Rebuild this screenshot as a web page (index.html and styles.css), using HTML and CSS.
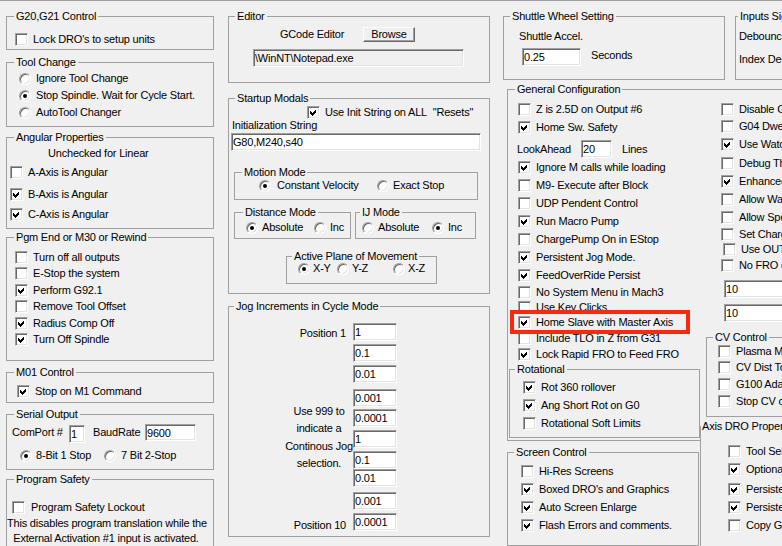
FILE: index.html
```html
<!DOCTYPE html>
<html>
<head>
<meta charset="utf-8">
<title>General Config</title>
<link rel="stylesheet" href="styles.css">
</head>
<body>
<div class="page">

  <div class="col col1">
    <fieldset class="grp g20"><legend>G20,G21 Control</legend>
      <div class="row h16 mt8 pl8"><span class="cb"></span>Lock DRO's to setup units</div>
    </fieldset>

    <fieldset class="grp tool"><legend>Tool Change</legend>
      <div class="pt1 pl12">
        <div class="row h17"><span class="rb"></span>Ignore Tool Change</div>
        <div class="row h17"><span class="rb on"></span>Stop Spindle. Wait for Cycle Start.</div>
        <div class="row h17"><span class="rb"></span>AutoTool Changer</div>
      </div>
    </fieldset>

    <fieldset class="grp angular"><legend>Angular Properties</legend>
      <div class="note">Unchecked for Linear</div>
      <div class="pl3">
        <div class="row h16 mt4"><span class="cb"></span>A-Axis is Angular</div>
        <div class="row h16 mt6"><span class="cb on"><svg viewBox="0 0 13 13" shape-rendering="crispEdges"><path d="M3 5l2 2 4-4v3l-4 4-2-2z"/></svg></span>B-Axis is Angular</div>
        <div class="row h16 mt4"><span class="cb on"><svg viewBox="0 0 13 13" shape-rendering="crispEdges"><path d="M3 5l2 2 4-4v3l-4 4-2-2z"/></svg></span>C-Axis is Angular</div>
      </div>
    </fieldset>

    <fieldset class="grp pgm"><legend>Pgm End or M30 or Rewind</legend>
      <div class="pt5 pl8">
        <div class="row h165"><span class="cb"></span>Turn off all outputs</div>
        <div class="row h165"><span class="cb"></span>E-Stop the system</div>
        <div class="row h165"><span class="cb on"><svg viewBox="0 0 13 13" shape-rendering="crispEdges"><path d="M3 5l2 2 4-4v3l-4 4-2-2z"/></svg></span>Perform G92.1</div>
        <div class="row h165"><span class="cb"></span>Remove Tool Offset</div>
        <div class="row h165"><span class="cb on"><svg viewBox="0 0 13 13" shape-rendering="crispEdges"><path d="M3 5l2 2 4-4v3l-4 4-2-2z"/></svg></span>Radius Comp Off</div>
        <div class="row h165"><span class="cb on"><svg viewBox="0 0 13 13" shape-rendering="crispEdges"><path d="M3 5l2 2 4-4v3l-4 4-2-2z"/></svg></span>Turn Off Spindle</div>
      </div>
    </fieldset>

    <fieldset class="grp m01"><legend>M01 Control</legend>
      <div class="row h16 mt4 pl10"><span class="cb on"><svg viewBox="0 0 13 13" shape-rendering="crispEdges"><path d="M3 5l2 2 4-4v3l-4 4-2-2z"/></svg></span>Stop on M1 Command</div>
    </fieldset>

    <fieldset class="grp serial"><legend>Serial Output</legend>
      <div class="com">
        <span class="lbl-com">ComPort #</span><input class="tb tb-com" value="1"><span class="lbl-baud">BaudRate</span><input class="tb tb-baud" value="9600">
      </div>
      <div class="row h13 mt6 pl13 opts">
        <span class="opt w84 g4"><span class="rb on"></span>8-Bit 1 Stop</span>
        <span class="opt"><span class="rb"></span>7 Bit 2-Stop</span>
      </div>
    </fieldset>

    <fieldset class="grp safety"><legend>Program Safety</legend>
      <div class="row h16 mt13 pl5 g6"><span class="cb"></span>Program Safety Lockout</div>
      <div class="safety-note">This disables program translation while the<br>External Activation #1 input is activated.</div>
    </fieldset>
  </div>

  <div class="col col2">
    <fieldset class="grp editor"><legend>Editor</legend>
      <div class="ed-row"><span class="ed-lbl">GCode Editor</span><span class="btn">Browse</span></div>
      <input class="tb ro path" value="\WinNT\Notepad.exe">
    </fieldset>

    <fieldset class="grp startup"><legend>Startup Modals</legend>
      <div class="row h14 pl78"><span class="cb on"><svg viewBox="0 0 13 13" shape-rendering="crispEdges"><path d="M3 5l2 2 4-4v3l-4 4-2-2z"/></svg></span>Use Init String on ALL&nbsp; "Resets"</div>
      <div class="init-lbl">Initialization String</div>
      <input class="tb init" value="G80,M240,s40">

      <fieldset class="grp motion"><legend>Motion Mode</legend>
        <div class="row h13 pl24 opts">
          <span class="opt w118 g6"><span class="rb on"></span>Constant Velocity</span>
          <span class="opt g4"><span class="rb"></span>Exact Stop</span>
        </div>
      </fieldset>

      <div class="modes">
        <fieldset class="grp dist"><legend>Distance Mode</legend>
          <div class="row h13 mt2 pl11 opts">
            <span class="opt w68 g4"><span class="rb on"></span>Absolute</span>
            <span class="opt g4"><span class="rb"></span>Inc</span>
          </div>
        </fieldset>
        <fieldset class="grp ij"><legend>IJ Mode</legend>
          <div class="row h13 mt2 pl6 opts">
            <span class="opt w70 g4"><span class="rb"></span>Absolute</span>
            <span class="opt g4"><span class="rb on"></span>Inc</span>
          </div>
        </fieldset>
      </div>

      <fieldset class="grp plane"><legend>Active Plane of Movement</legend>
        <div class="row h11 pl11 opts">
          <span class="opt w39 g3"><span class="rb on"></span>X-Y</span>
          <span class="opt w56 g3"><span class="rb"></span>Y-Z</span>
          <span class="opt g3"><span class="rb"></span>X-Z</span>
        </div>
      </fieldset>
    </fieldset>

    <fieldset class="grp jog"><legend>Jog Increments in Cycle Mode</legend>
      <div class="jog-body">
        <div class="jog-labels">
          <div class="pos pos1">Position 1</div>
          <div class="jog-note">Use 999 to<br>indicate a<br>Continous Jog<br>selection.</div>
          <div class="pos pos10">Position 10</div>
        </div>
        <div class="jog-inputs">
          <input class="tb" value="1">
          <input class="tb" value="0.1">
          <input class="tb" value="0.01">
          <input class="tb" value="0.001">
          <input class="tb" value="0.0001">
          <input class="tb" value="1">
          <input class="tb" value="0.1">
          <input class="tb" value="0.01">
          <input class="tb" value="0.001">
          <input class="tb" value="0.0001">
        </div>
      </div>
    </fieldset>
  </div>

  <div class="col col3">
    <div class="top3">
      <fieldset class="grp shuttle"><legend>Shuttle Wheel Setting</legend>
        <div class="sh-lbl">Shuttle Accel.</div>
        <div class="sh-row"><input class="tb sh-in" value="0.25"><span class="sh-sec">Seconds</span></div>
      </fieldset>
      <fieldset class="grp inputs"><legend>Inputs Signals</legend>
        <div class="in-lbl1">Debounce Interval</div>
        <div class="in-lbl2">Index Debounce</div>
      </fieldset>
    </div>

    <fieldset class="grp gen"><legend>General Configuration</legend>
      <div class="gen-body">
        <div class="gen-left">
          <div class="row h18 pl10"><span class="cb"></span>Z is 2.5D on Output #6</div>
          <div class="row h18 pl10"><span class="cb on"><svg viewBox="0 0 13 13" shape-rendering="crispEdges"><path d="M3 5l2 2 4-4v3l-4 4-2-2z"/></svg></span>Home Sw. Safety</div>
          <div class="look"><span class="look-lbl">LookAhead</span><input class="tb look-in" value="20"><span class="look-lines">Lines</span></div>
          <div class="row h18 pl10"><span class="cb on"><svg viewBox="0 0 13 13" shape-rendering="crispEdges"><path d="M3 5l2 2 4-4v3l-4 4-2-2z"/></svg></span>Ignore M calls while loading</div>
          <div class="row h18 pl10"><span class="cb"></span>M9- Execute after Block</div>
          <div class="row h18 pl10"><span class="cb"></span>UDP Pendent Control</div>
          <div class="row h18 pl10"><span class="cb on"><svg viewBox="0 0 13 13" shape-rendering="crispEdges"><path d="M3 5l2 2 4-4v3l-4 4-2-2z"/></svg></span>Run Macro Pump</div>
          <div class="row h18 pl10"><span class="cb"></span>ChargePump On in EStop</div>
          <div class="row h18 pl10"><span class="cb on"><svg viewBox="0 0 13 13" shape-rendering="crispEdges"><path d="M3 5l2 2 4-4v3l-4 4-2-2z"/></svg></span>Persistent Jog Mode.</div>
          <div class="row h18 pl10"><span class="cb on"><svg viewBox="0 0 13 13" shape-rendering="crispEdges"><path d="M3 5l2 2 4-4v3l-4 4-2-2z"/></svg></span>FeedOverRide Persist</div>
          <div class="row h16 pl10"><span class="cb"></span>No System Menu in Mach3</div>
          <div class="row h14 pl10"><span class="cb"></span>Use Key Clicks</div>
          <div class="row h16 pl10 hl"><span class="cb on"><svg viewBox="0 0 13 13" shape-rendering="crispEdges"><path d="M3 5l2 2 4-4v3l-4 4-2-2z"/></svg></span>Home Slave with Master Axis</div>
          <div class="row h16 pl10"><span class="cb"></span>Include TLO in Z from G31</div>
          <div class="row h16 pl10"><span class="cb on"><svg viewBox="0 0 13 13" shape-rendering="crispEdges"><path d="M3 5l2 2 4-4v3l-4 4-2-2z"/></svg></span>Lock Rapid FRO to Feed FRO</div>

          <fieldset class="grp rot"><legend>Rotational</legend>
            <div class="pt2 pl13">
              <div class="row h18"><span class="cb on"><svg viewBox="0 0 13 13" shape-rendering="crispEdges"><path d="M3 5l2 2 4-4v3l-4 4-2-2z"/></svg></span>Rot 360 rollover</div>
              <div class="row h18"><span class="cb on"><svg viewBox="0 0 13 13" shape-rendering="crispEdges"><path d="M3 5l2 2 4-4v3l-4 4-2-2z"/></svg></span>Ang Short Rot on G0</div>
              <div class="row h18"><span class="cb"></span>Rotational Soft Limits</div>
            </div>
          </fieldset>
        </div>

        <div class="gen-right">
          <div class="row h18 pl21"><span class="cb"></span>Disable Gouge Check</div>
          <div class="row h17 pl21"><span class="cb"></span>G04 Dwell param in ms</div>
          <div class="row h19 pl21"><span class="cb on"><svg viewBox="0 0 13 13" shape-rendering="crispEdges"><path d="M3 5l2 2 4-4v3l-4 4-2-2z"/></svg></span>Use Watchdogs</div>
          <div class="row h18 pl21"><span class="cb"></span>Debug This Run</div>
          <div class="row h19 pl21"><span class="cb on"><svg viewBox="0 0 13 13" shape-rendering="crispEdges"><path d="M3 5l2 2 4-4v3l-4 4-2-2z"/></svg></span>Enhanced Pulsing</div>
          <div class="row h17 pl21"><span class="cb"></span>Allow Wave Files</div>
          <div class="row h18 pl21"><span class="cb"></span>Allow Speech</div>
          <div class="row h16 pl21"><span class="cb"></span>Set Charge Pump2</div>
          <div class="row h15 pl23"><span class="cb"></span>Use OUTPUT</div>
          <div class="row h16 pl21"><span class="cb"></span>No FRO on Jog</div>
          <input class="tb ten ten1" value="10">
          <input class="tb ten ten2" value="10">

          <fieldset class="grp cv"><legend>CV Control</legend>
            <div class="pl11">
              <div class="row h15"><span class="cb"></span>Plasma Mode</div>
              <div class="row h17"><span class="cb"></span>CV Dist Tolerance</div>
              <div class="row h17"><span class="cb"></span>G100 Adaptive NC</div>
              <div class="row h16"><span class="cb"></span>Stop CV on angles</div>
            </div>
          </fieldset>

          <fieldset class="grp axis"><legend>Axis DRO Properties</legend>
            <div class="pt9 pl27">
              <div class="row h18"><span class="cb"></span>Tool Selections Persistant</div>
              <div class="row h19"><span class="cb on"><svg viewBox="0 0 13 13" shape-rendering="crispEdges"><path d="M3 5l2 2 4-4v3l-4 4-2-2z"/></svg></span>Optional Offline Lock</div>
              <div class="row h20"><span class="cb on"><svg viewBox="0 0 13 13" shape-rendering="crispEdges"><path d="M3 5l2 2 4-4v3l-4 4-2-2z"/></svg></span>Persistent Offsets</div>
              <div class="row h17"><span class="cb on"><svg viewBox="0 0 13 13" shape-rendering="crispEdges"><path d="M3 5l2 2 4-4v3l-4 4-2-2z"/></svg></span>Persistent DROs</div>
              <div class="row h18"><span class="cb"></span>Copy G54 from G59</div>
            </div>
          </fieldset>
        </div>
      </div>
    </fieldset>

    <fieldset class="grp screen"><legend>Screen Control</legend>
      <div class="pt3 pl13">
        <div class="row h18"><span class="cb"></span>Hi-Res Screens</div>
        <div class="row h18"><span class="cb on"><svg viewBox="0 0 13 13" shape-rendering="crispEdges"><path d="M3 5l2 2 4-4v3l-4 4-2-2z"/></svg></span>Boxed DRO's and Graphics</div>
        <div class="row h18"><span class="cb on"><svg viewBox="0 0 13 13" shape-rendering="crispEdges"><path d="M3 5l2 2 4-4v3l-4 4-2-2z"/></svg></span>Auto Screen Enlarge</div>
        <div class="row h18"><span class="cb on"><svg viewBox="0 0 13 13" shape-rendering="crispEdges"><path d="M3 5l2 2 4-4v3l-4 4-2-2z"/></svg></span>Flash Errors and comments.</div>
      </div>
    </fieldset>
  </div>

</div>
</body>
</html>
```

FILE: styles.css
```css
* { box-sizing: border-box; }
html, body { margin: 0; padding: 0; background: #f0f0f0; overflow: hidden; }
body {
  width: 782px; height: 546px;
  font-family: "Liberation Sans", Arial, sans-serif;
  font-size: 11px; line-height: 13px; letter-spacing: -0.2px; color: #000;
}
.page {
  display: flex; align-items: flex-start;
  height: 546px; border-top: 1px solid #a0a0a0;
  padding: 9px 0 0 6px;
}
.col { display: flex; flex-direction: column; flex: none; }
.col1 { width: 208px; }
.col2 { width: 262px; margin-left: 14px; }
.col3 { width: 300px; margin-left: 13px; }

/* group boxes */
.grp {
  margin: 0; padding: 0; min-width: 0; flex: none;
  border: 1px solid #a0a0a0;
}
.grp > legend {
  padding: 0 2px; margin-left: 6px; height: 13px; line-height: 13px; white-space: nowrap;
}
.col1 .grp > legend { margin-left: 7px; }

/* controls */
.row { display: flex; align-items: center; gap: 5px; white-space: nowrap; flex: none; }
.cb {
  position: relative; flex: none; width: 13px; height: 13px; background: #fff;
  border: 1px solid; border-color: #a0a0a0 #fff #fff #a0a0a0;
  box-shadow: inset 1px 1px #696969, inset -1px -1px #e3e3e3;
}
.cb svg { position: absolute; left: -1px; top: -1px; width: 13px; height: 13px; fill: #000; }
.rb {
  position: relative; flex: none; width: 12px; height: 12px; border-radius: 50%; background: #fff;
  border: 1px solid; border-color: #a0a0a0 #fff #fff #a0a0a0;
  box-shadow: inset 1px 1px #696969, inset -1px -1px #e3e3e3;
}
.rb.on::after {
  content: ""; position: absolute; left: 3px; top: 3px; width: 4px; height: 4px;
  border-radius: 50%; background: #000;
}
.opts { gap: 0; }
.opt { display: flex; align-items: center; gap: 5px; flex: none; white-space: nowrap; }
.tb {
  display: block; margin: 0; height: 18px; background: #fff; color: #000;
  font: inherit; letter-spacing: inherit; padding: 0 1px;
  border: 1px solid; border-color: #a0a0a0 #fff #fff #a0a0a0;
  box-shadow: inset 1px 1px #696969, inset -1px -1px #e3e3e3;
  outline: none;
}
.tb.ro { background: #f0f0f0; }
.btn {
  display: block; flex: none; width: 52px; height: 15px; line-height: 13px; text-align: center;
  background: #f0f0f0; border: 1px solid; border-color: #fff #696969 #696969 #fff;
  box-shadow: inset -1px -1px #a0a0a0;
}

/* utilities */
.h11 { height: 11px; } .h13 { height: 13px; } .h14 { height: 14px; } .h15 { height: 15px; }
.h16 { height: 16px; } .h165 { height: 16.5px; } .h17 { height: 17px; } .h18 { height: 18px; }
.h19 { height: 19px; } .h20 { height: 20px; }
.mt2 { margin-top: 2px; } .mt4 { margin-top: 4px; } .mt6 { margin-top: 6px; }
.mt8 { margin-top: 8px; } .mt13 { margin-top: 13px; }
.pt1 { padding-top: 1px; } .pt2 { padding-top: 2px; } .pt3 { padding-top: 3px; }
.pt5 { padding-top: 5px; } .pt9 { padding-top: 9px; }
.pl3 { padding-left: 3px; } .pl5 { padding-left: 5px; } .pl6 { padding-left: 6px; }
.pl8 { padding-left: 8px; } .pl10 { padding-left: 10px; } .pl11 { padding-left: 11px; }
.pl12 { padding-left: 12px; } .pl13 { padding-left: 13px; } .pl21 { padding-left: 21px; }
.pl23 { padding-left: 23px; } .pl24 { padding-left: 24px; } .pl27 { padding-left: 27px; }
.pl78 { padding-left: 78px; }
.g3 { gap: 3px; } .g4 { gap: 4px; } .g6 { gap: 6px; }
.w39 { width: 39px; } .w56 { width: 56px; } .w68 { width: 68px; } .w70 { width: 70px; }
.w84 { width: 84px; } .w118 { width: 118px; }

/* column 1 */
.g20 { height: 40px; }
.tool { margin-top: 6px; height: 71px; }
.angular { margin-top: 4px; height: 98px; }
.note { margin: 3px 0 0 41px; height: 13px; white-space: nowrap; }
.pgm { margin-top: 2px; height: 130px; }
.m01 { margin-top: 5px; height: 37px; }
.serial { margin-top: 5px; height: 62px; }
.com { display: flex; align-items: flex-start; height: 19px; margin-top: 3px; padding-left: 5px; }
.lbl-com { width: 57px; margin-top: 2px; white-space: nowrap; flex: none; }
.tb-com { width: 16px; margin-top: 1px; flex: none; }
.lbl-baud { width: 52px; margin: 2px 0 0 8px; white-space: nowrap; flex: none; }
.tb-baud { width: 51px; height: 17px; flex: none; }
.safety { margin-top: 3px; height: 80px; }
.safety-note { width: 198px; margin-top: 1px; text-align: center; line-height: 15px; white-space: nowrap; }

/* column 2 */
.editor { height: 73px; }
.ed-row { display: flex; align-items: center; height: 15px; margin-top: 4px; padding-left: 51px; }
.ed-lbl { width: 83px; flex: none; white-space: nowrap; }
.path { margin: 7px 0 0 24px; width: 211px; }
.startup { margin-top: 9px; height: 202px; }
.init-lbl { height: 13px; padding-left: 3px; white-space: nowrap; }
.init { margin: 1px 0 0 2px; width: 250px; }
.motion { margin: 15px 0 0 5px; width: 244px; height: 34px; }
.motion > legend { margin-left: 7px; }
.modes { display: flex; gap: 4px; margin-top: 6px; padding-left: 5px; }
.dist { width: 117px; height: 33px; }
.dist > legend { margin-left: 8px; }
.ij { width: 121px; height: 33px; }
.ij > legend { margin-left: 4px; }
.plane { margin: 11px 0 0 57px; width: 151px; height: 34px; }
.plane > legend { margin-left: 5px; }
.jog { margin-top: 6px; height: 237px; }
.jog > legend { margin-left: 5px; }
.jog-body { display: flex; }
.jog-labels { width: 124px; flex: none; }
.pos { text-align: right; padding-right: 7px; line-height: 16px; white-space: nowrap; }
.pos1 { margin-top: 12px; }
.jog-note { margin: 62px 0 0 54px; width: 72px; text-align: center; line-height: 17.3px; white-space: nowrap; }
.pos10 { margin-top: 45px; }
.jog-inputs { padding-top: 10px; }
.jog-inputs .tb { width: 44px; }
.jog-inputs .tb:nth-child(2), .jog-inputs .tb:nth-child(3),
.jog-inputs .tb:nth-child(6), .jog-inputs .tb:nth-child(7),
.jog-inputs .tb:nth-child(10) { margin-top: 3px; }
.jog-inputs .tb:nth-child(4) { margin-top: 6px; }
.jog-inputs .tb:nth-child(5) { margin-top: 2px; }
.jog-inputs .tb:nth-child(9) { margin-top: 5px; }

/* column 3 */
.top3 { display: flex; gap: 10px; }
.shuttle { width: 222px; height: 70px; }
.inputs { width: 120px; height: 70px; }
.inputs > legend { margin-left: 2px; }
.sh-lbl { margin: 7px 0 0 15px; height: 13px; white-space: nowrap; }
.sh-row { display: flex; align-items: flex-start; margin: 5px 0 0 18px; }
.sh-in { width: 59px; flex: none; }
.sh-sec { margin: 1px 0 0 10px; }
.in-lbl1 { margin: 7px 0 0 3px; white-space: nowrap; }
.in-lbl2 { margin: 10px 0 0 3px; white-space: nowrap; }

.gen { margin: 3px 0 0 4px; width: 300px; height: 358px; border-right: none; border-bottom: none; }
.gen > legend { margin-left: 7px; }
.gen-body { display: flex; align-items: flex-start; }
.gen-left { width: 192px; height: 345px; padding-top: 4px; border-bottom: 1px solid #a0a0a0; flex: none; }
.look { display: flex; align-items: flex-end; height: 22px; padding-left: 9px; }
.look-lbl { width: 64px; margin-bottom: 2px; flex: none; }
.look-in { width: 31px; flex: none; }
.look-lines { margin: 0 0 2px 10px; }
.hl { position: relative; z-index: 1; }
.hl::before {
  content: ""; position: absolute; z-index: -1;
  left: 2px; top: -4px; bottom: -4px; width: 172px;
  border: 4px solid #f8290f; background: #f0f0f0;
}
.rot { margin: 1px 0 0 1px; width: 191px; height: 75px; }
.rot > legend { margin-left: 5px; }
.gen-right { width: 100px; padding-top: 4px; flex: none; }
.ten { width: 80px; margin-left: 24px; }
.ten1 { margin-top: 7px; }
.ten2 { margin-top: 6px; }
.cv { margin: 9px 0 0 6px; width: 100px; height: 86px; }
.axis { margin-top: 3px; width: 100px; height: 140px; }
.axis > legend { margin-left: 0; padding: 0 1px; }
.screen { margin: 5px 0 0 4px; width: 192px; height: 100px; }
```
